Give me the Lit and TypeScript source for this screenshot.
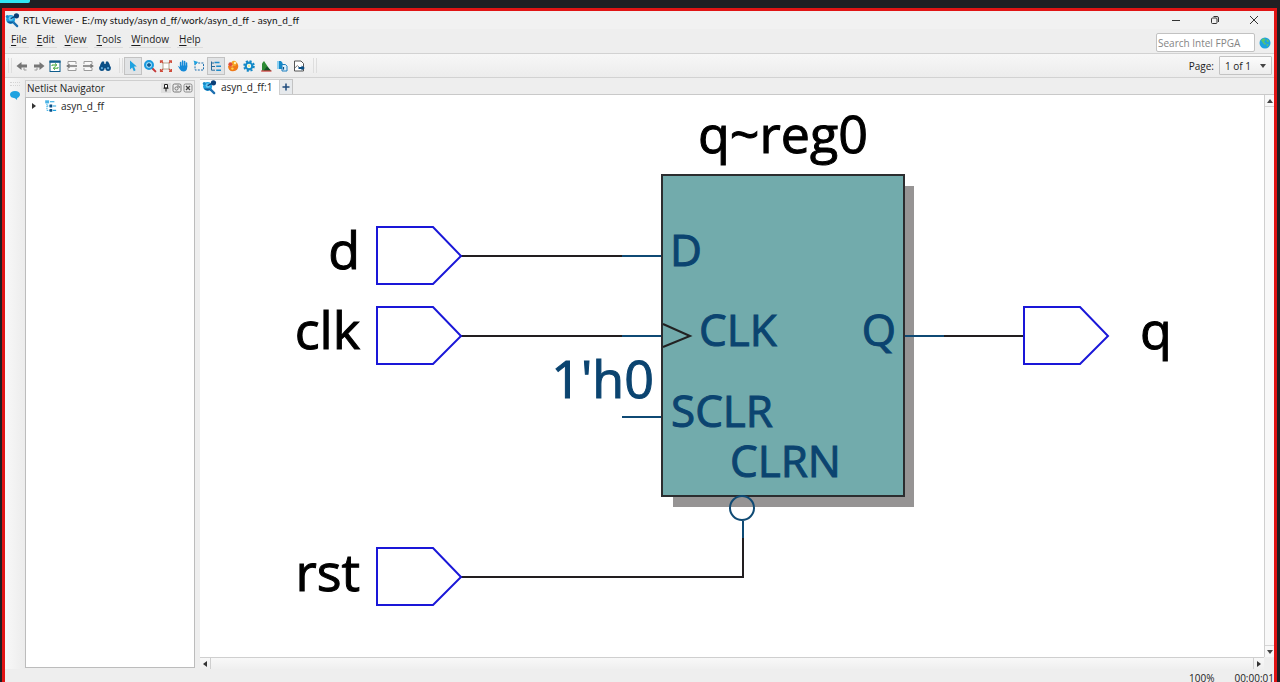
import { LitElement, html, css, svg } from "lit";
import { customElement, state } from "lit/decorators.js";

const BLUE = "#1ea2e0";
const NAVY = "#0b4f86";

const viewerLogo = svg`
  <path d="M9 10 L13 14" stroke="#1d6fb0" stroke-width="2.4" stroke-linecap="round"/>
  <circle cx="6" cy="6.8" r="4.8" fill="#1ea2e0"/>
  <circle cx="6.2" cy="5.8" r="2.4" fill="#6cc8f0"/>
  <path d="M2 9 A4.8 4.8 0 0 0 10 9 Z" fill="#135a9a"/>
  <circle cx="2.4" cy="3.6" r="1.6" fill="#1489c8"/>
  <path d="M6 6 L11 3.5" stroke="#0b3f77" stroke-width="1.4"/>
  <circle cx="12.2" cy="3" r="2.8" fill="#0b3f77"/>
`;

const icons = {
  back: svg`<path d="M2.5 8 L7.5 4 V6.4 H13 V9.6 H7.5 V12 Z" fill="#767676"/><path d="M10 9.6 V12 H12.5" stroke="#9a9a9a" fill="none"/>`,
  forward: svg`<path d="M13.5 8 L8.5 4 V6.4 H3 V9.6 H8.5 V12 Z" fill="#767676"/><path d="M6 9.6 V12 H3.5" stroke="#9a9a9a" fill="none"/>`,
  refresh: svg`<rect x="3" y="3" width="10" height="10.5" fill="#fff" stroke="#0f5c8c"/><path d="M2.5 3.8 H13.5" stroke="#0f5c8c" stroke-width="2"/><path d="M5 8 V7 H9.5 M8 5.4 L9.8 7 L8 8.5 M11 9 V10.2 H6.5 M8 8.8 L6.3 10.2 L8 11.8" stroke="#3fa535" fill="none"/>`,
  unfoldLeft: svg`<path d="M4 6 V3.5 H12 V6 M4 10 V12.5 H12 V10" stroke="#9a9a9a" fill="#fafafa"/><path d="M3 8 H13 M5.5 6.2 L3.2 8 L5.5 9.8" stroke="#777" stroke-width="1.3" fill="none"/>`,
  unfoldRight: svg`<path d="M4 6 V3.5 H12 V6 M4 10 V12.5 H12 V10" stroke="#9a9a9a" fill="#fafafa"/><path d="M3 8 H13 M10.5 6.2 L12.8 8 L10.5 9.8" stroke="#777" stroke-width="1.3" fill="none"/>`,
  find: svg`<path d="M3.5 6 L5 3.5 H7 L7.5 6 H8.5 L9 3.5 H11 L12.5 6 L13.6 10 H2.4 Z" fill="#0b4f86"/><circle cx="4.9" cy="10.2" r="2.7" fill="#0b4f86"/><circle cx="11.1" cy="10.2" r="2.7" fill="#0b4f86"/><circle cx="4.9" cy="10.2" r="1.1" fill="#5aa7d8"/><circle cx="11.1" cy="10.2" r="1.1" fill="#5aa7d8"/>`,
  select: svg`<path d="M5 2.5 L11.8 8.6 H9 L10.6 12.3 L8.8 13.2 L7.2 9.6 L5 11.6 Z" fill="#1ea2e0"/>`,
  zoom: svg`<path d="M10 10 L13.4 13.4" stroke="#c53a3a" stroke-width="2" stroke-linecap="round"/><circle cx="7" cy="7" r="4" fill="#8fd3f3" stroke="#1a9be0" stroke-width="2"/><path d="M7 5 V9 M5 7 H9" stroke="#0b4f86" stroke-width="1.3"/>`,
  fit: svg`<rect x="5" y="5" width="6" height="6" fill="#fff" stroke="#b5a58f"/><path d="M2.5 5 V2.8 H5 M11 2.8 H13.4 V5 M13.4 11 V13.4 H11 M5 13.4 H2.5 V11 M3 3 L5 5 M13 3 L11 5 M3 13 L5 11 M13 13 L11 11" stroke="#cf4d3c" stroke-width="1.2" fill="none"/>`,
  hand: svg`<path d="M5.6 8.5 V4.4 M7.6 8 V3 M9.6 8 V3.4 M11.5 8.6 V5" stroke="#1489d8" stroke-width="1.5" stroke-linecap="round"/><path d="M2.8 7.8 L5 9 V7.5 H12.2 V9.5 Q12 13.5 8.5 13.5 Q6 13.4 4.8 11.2 Z" fill="#1489d8"/>`,
  area: svg`<rect x="4" y="5" width="8.5" height="7" fill="none" stroke="#1e6fae" stroke-dasharray="2 1.2"/><path d="M2.5 2.5 L7.2 4 L4 7.2 Z" fill="#1ea2e0"/>`,
  tree: svg`<path d="M3.5 3.5 V12.2 H7 M3.5 5 H6 M3.5 8.5 H7" stroke="#2a6a98" fill="none"/><path d="M6.5 4.5 H11.5 M8.2 8.3 H13 M8.2 12.2 H13" stroke="#1e8dcc" stroke-width="1.5"/>`,
  palette: svg`<path d="M3 7.5 Q3 13.4 8 13.3 Q13.3 13 13.3 8 Q13 5 10.8 4.2 Q10.4 8 7.4 8.2 Q4.5 8 3 7.5" fill="#ef7a1a"/><circle cx="9" cy="5.4" r="2.6" fill="#f6a623"/><circle cx="5.4" cy="6.2" r="2" fill="#e04d3b"/><circle cx="10" cy="5" r="1.2" fill="#fff0b0"/><circle cx="7.4" cy="10.6" r="1.2" fill="#ffd44d"/>`,
  gear: svg`<circle cx="8" cy="8" r="4.9" fill="none" stroke="#1489c8" stroke-width="1.8" stroke-dasharray="2.1 1.75"/><circle cx="8" cy="8" r="3.3" fill="#fff" stroke="#1489c8" stroke-width="2.2"/><circle cx="8" cy="8" r="1.4" fill="#e8eea0"/>`,
  bird: svg`<path d="M4 12.8 V5.5 L6 3 L12.5 12.8 Z" fill="#2d8b34"/><path d="M5.5 12.8 L9 8.6 L13.4 12.8 Z" fill="#14532a"/><path d="M3.2 13 H13.5" stroke="#c33" stroke-width="1.2"/>`,
  export: svg`<path d="M3 3 H7 L8.6 5 V11 H3 Z" fill="#1489c8"/><path d="M3 3 H5 V11 H3 Z" fill="#8fd0f0"/><path d="M8 6.5 H11.5 L13 8.2 V13 H8 Z" fill="#dff1fb" stroke="#1e7fbe"/><path d="M9.5 9 V11.6" stroke="#0b4f86" stroke-width="1.2"/>`,
  image: svg`<path d="M3.5 3 H10 L12.5 5.5 V13 H3.5 Z" fill="#fff" stroke="#555"/><path d="M4 9.8 L6.4 7.5 L8.4 9.5" stroke="#777" fill="none"/><path d="M7.5 10 H11" stroke="#0b4f86" stroke-width="2"/><path d="M10.5 7.4 V12.6 L13.8 10 Z" fill="#0b4f86"/>`,
};

type IconName = keyof typeof icons;

const historyTools: [IconName, string][] = [
  ["back", "Back"], ["forward", "Forward"], ["refresh", "Refresh"],
  ["unfoldLeft", "Previous page"], ["unfoldRight", "Next page"], ["find", "Find"],
];
const viewTools: [IconName, string][] = [
  ["select", "Selection tool"], ["zoom", "Zoom tool"], ["fit", "Fit in window"],
  ["hand", "Hand tool"], ["area", "Area selection"], ["tree", "Netlist Navigator"],
  ["palette", "Color settings"], ["gear", "Display settings"], ["bird", "Bird's eye view"],
  ["export", "Copy"], ["image", "Export image"],
];

const icon = (art: unknown, cls = "icon") =>
  html`<svg class=${cls} viewBox="0 0 16 16" fill="none" aria-hidden="true">${art}</svg>`;

@customElement("rtl-schematic")
export class RtlSchematic extends LitElement {
  static styles = css`
    :host { display: block; min-width: 0; min-height: 0; background: #fff; overflow: hidden; }
    .sheet { display: block; width: 100%; height: 100%; }
    .sheet text { font-family: "Open Sans", "Noto Sans", sans-serif; stroke-width: 1px; }
    .name { font-size: 52px; fill: #000; stroke: #000; }
    .const { font-size: 52px; fill: #0b4470; stroke: #0b4470; }
    .pin { font-size: 44px; fill: #0b4470; stroke: #0b4470; }
    .port { fill: #fff; stroke: #1a17d8; stroke-width: 2; }
    .wire { fill: none; stroke: #221e20; stroke-width: 2; }
    .stub { fill: none; stroke: #0f4a74; stroke-width: 2; }
    .end { text-anchor: end; }
  `;

  private port(x: number, y: number) {
    return svg`<path class="port" d="M${x} ${y - 29} h56 l28 29 l-28 28 h-56 Z"/>`;
  }

  render() {
    return html`
      <svg class="sheet" viewBox="200 95 1064 562" role="img" aria-label="Schematic of asyn_d_ff">
        <rect x="673" y="186" width="241" height="321" fill="#969494"/>
        <rect x="662" y="175" width="242" height="321" fill="#72abac" stroke="#2b2d2f" stroke-width="2"/>
        <path class="wire" d="M461 256 H623 M461 336 H623 M944 336 H1023 M461 577 H743 V537"/>
        <path class="stub" d="M622 256 H661 M622 336 H661 M622 417 H661 M905 336 H944 M743 521 V538"/>
        <circle class="stub" cx="742" cy="508" r="12"/>
        <path d="M663 324 L690 336 L663 347" fill="none" stroke="#222" stroke-width="2"/>
        ${this.port(377, 256)} ${this.port(377, 336)} ${this.port(377, 577)} ${this.port(1024, 336)}
        <text class="name" x="698" y="153">q~reg0</text>
        <text class="name end" x="360" y="269">d</text>
        <text class="name end" x="360" y="349">clk</text>
        <text class="name end" x="360" y="591">rst</text>
        <text class="name" x="1140" y="349">q</text>
        <text class="const end" x="654" y="398">1'h0</text>
        <text class="pin" x="670" y="266">D</text>
        <text class="pin" x="699" y="346">CLK</text>
        <text class="pin end" x="896" y="346">Q</text>
        <text class="pin" x="671" y="427">SCLR</text>
        <text class="pin" x="730" y="477">CLRN</text>
      </svg>
    `;
  }
}

@customElement("app-root")
export class AppRoot extends LitElement {
  static styles = css`
    :host {
      display: grid; grid-template-rows: minmax(0, 1fr); box-sizing: border-box;
      height: 100vh; padding: 8px 3px 0 2px; overflow: hidden; position: relative;
      background: #1f1f23; color: #1c1c1c;
      font: 10px/14px "Open Sans", "Noto Sans", sans-serif;
    }
    * { box-sizing: border-box; }
    button, input, select { font: inherit; color: inherit; margin: 0; padding: 0; border: 0; background: none; }
    .accent { position: absolute; left: 0; top: 0; width: 30px; height: 3px; background: #2fe6f2; border-radius: 0 0 2px 0; }
    .window {
      display: grid; grid-template-rows: 18px 24px 25px minmax(0, 1fr) 13px;
      border: 3px solid #e01414; border-bottom: 0; background: #eee; min-height: 0;
    }
    .icon { display: block; width: 16px; height: 16px; }
    .logo { display: block; width: 15px; height: 15px; flex: none; }

    .title { display: flex; align-items: center; gap: 3px; background: #f1f1f1; }
    .title h1 { margin: 0; flex: 1; font: 10px/14px Lato, "Open Sans", sans-serif; color: #111; }
    .caption { display: flex; padding-right: 1px; }
    .caption button { width: 39px; height: 18px; display: grid; place-items: center; }
    .caption svg { width: 10px; height: 10px; }

    .menus { display: flex; align-items: flex-start; padding-left: 4px; }
    .menus nav { display: flex; flex: 1; gap: 6px; padding-top: 2px; }
    .menus nav button { height: 17px; padding: 0 2px; border-bottom: 1px solid #dcdcdc; }
    .menus nav button u { text-underline-offset: 2px; }
    .search { display: flex; align-items: center; gap: 4px; padding: 4px 3px 0 0; }
    .search input { width: 99px; height: 19px; padding: 0 1px; background: #fff; border: 1px solid #c2c2c2; border-radius: 2px; }
    .search input::placeholder { color: #858585; opacity: 1; }
    .globe { width: 12px; height: 12px; display: block; }

    .tools { display: flex; align-items: center; border: 1px solid #d2d2d2; border-width: 1px 0; background: linear-gradient(#f7f7f7, #ececec); padding: 0 2px 0 3px; }
    .grip { width: 4px; height: 15px; border: 1px solid #dedede; border-width: 0 1px; flex: none; }
    .group { display: flex; justify-content: space-between; margin: 0 6px 0 2px; }
    .group.history { width: 99px; }
    .group.view { width: 182px; }
    .group button { width: 16px; height: 16px; }
    .group button.on { outline: 1px solid #c2c2c2; background: #e1e3e5; }
    .page { display: flex; align-items: center; gap: 5px; margin-left: auto; }
    .picker { display: grid; align-items: center; }
    .picker > * { grid-area: 1 / 1; }
    .picker select { appearance: none; width: 53px; height: 19px; padding-left: 5px; border: 1px solid #c3c3c3; border-radius: 1px; background: linear-gradient(#fcfcfc, #ededed); }
    .picker svg { width: 6px; height: 4px; justify-self: end; margin-right: 6px; pointer-events: none; }

    .body { display: grid; grid-template-columns: 20px 170px minmax(0, 1fr); min-height: 0; }
    .rail { background: linear-gradient(90deg, #f8f8f8, #ececec); padding: 4px 4px 0; }
    .rail .dots { height: 4px; margin: 0 1px; border: 1px dotted #d4d4d4; border-width: 1px 0; }
    .rail button { display: block; margin-top: 3px; width: 12px; height: 12px; }
    .rail svg { width: 12px; height: 12px; display: block; }

    .navigator { display: grid; grid-template-rows: 17px minmax(0, 1fr); padding-top: 2px; min-height: 0; }
    .navhead { display: flex; align-items: center; gap: 1px; padding: 0 1px 2px; border: 1px solid #cfcfcf; border-width: 1px 1px 0 1px; }
    .navhead h2 { margin: 0; flex: 1; font: inherit; white-space: nowrap; }
    .navhead button { width: 10px; height: 10px; }
    .navhead button.pin { background: #dedede; }
    .navhead svg { display: block; width: 10px; height: 10px; }
    .list { margin: 0 0 1px; padding: 0 0 0 3px; background: #fff; border: 1px solid #bcbcbc; list-style: none; }
    .list li { display: flex; align-items: center; height: 15px; }
    .list .twisty { width: 10px; height: 12px; display: grid; place-items: center; }
    .twisty svg { width: 4px; height: 6px; }
    .list .icon { width: 14px; height: 14px; margin: 0 4px; }

    .editor { display: grid; grid-template: 17px minmax(0, 1fr) 12px / minmax(0, 1fr) 10px; padding-left: 5px; min-height: 0; }
    .tabs { grid-column: 1 / -1; display: flex; align-items: stretch; border-bottom: 1px solid #c9c9c9; }
    .tab { display: flex; align-items: center; gap: 4px; width: 80px; margin: 1px 0 -1px; padding: 0 0 1px 2px; background: #fff; border: 1px solid #cfcfcf; border-width: 1px 1px 0 0; white-space: nowrap; }
    .add { width: 13px; margin-top: 1px; display: grid; place-items: center; border: 1px solid #c3c3c3; border-width: 1px 1px 0 0; background: #e6e9ec; }
    .add svg { width: 8px; height: 8px; }
    .vbar { display: flex; flex-direction: column; justify-content: space-between; border-left: 1px solid #cfcfcf; background: #f8f8f8; }
    .vbar button { height: 12px; display: grid; place-items: center; }
    .hbar { display: flex; justify-content: space-between; border-top: 1px solid #cfcfcf; background: linear-gradient(#f8f8f8, #efefef); }
    .hbar button { width: 11px; display: grid; place-items: center; }
    .hbar button:first-child { border-right: 1px solid #cfcfcf; }
    .hbar button:last-child { border-left: 1px solid #cfcfcf; }
    .vbar button:first-child { border-bottom: 1px solid #d6d6d6; }
    .vbar button:last-child { border-top: 1px solid #d6d6d6; }
    .vbar svg { width: 6px; height: 4px; }
    .hbar svg { width: 4px; height: 6px; }

    .status { display: flex; justify-content: flex-end; align-items: flex-end; gap: 20px; line-height: 8px; }
  `;

  @state() private tool: IconName = "select";

  private toolButton([name, label]: [IconName, string]) {
    const on = name === this.tool || name === "tree";
    return html`<button class=${on ? "on" : ""} aria-label=${label} title=${label}
      @click=${() => (this.tool = name)}>${icon(icons[name])}</button>`;
  }

  render() {
    const menus = ["File", "Edit", "View", "Tools", "Window", "Help"];
    const up = html`<svg viewBox="0 0 6 4"><path d="M0 4 L3 0 L6 4Z" fill="#444"/></svg>`;
    const down = html`<svg viewBox="0 0 6 4"><path d="M0 0 L3 4 L6 0Z" fill="#444"/></svg>`;
    const left = html`<svg viewBox="0 0 4 6"><path d="M4 0 L0 3 L4 6Z" fill="#333"/></svg>`;
    const right = html`<svg viewBox="0 0 4 6"><path d="M0 0 L4 3 L0 6Z" fill="#333"/></svg>`;
    return html`
      <div class="accent"></div>
      <div class="window">
        <header class="title">
          ${icon(viewerLogo, "logo")}
          <h1>RTL Viewer - E:/my study/asyn d_ff/work/asyn_d_ff - asyn_d_ff</h1>
          <div class="caption">
            <button aria-label="Minimize"><svg viewBox="0 0 10 10"><path d="M1 5.5 H9" stroke="#333"/></svg></button>
            <button aria-label="Restore"><svg viewBox="0 0 10 10" fill="none" stroke="#333"><rect x="1.5" y="3" width="5.5" height="5.5" rx="1"/><path d="M3.5 1.5 H7 Q8.5 1.5 8.5 3 V7"/></svg></button>
            <button aria-label="Close"><svg viewBox="0 0 10 10"><path d="M1 1 L9 9 M9 1 L1 9" stroke="#333"/></svg></button>
          </div>
        </header>

        <div class="menus">
          <nav aria-label="Menu">
            ${menus.map((m) => html`<button><u>${m[0]}</u>${m.slice(1)}</button>`)}
          </nav>
          <div class="search">
            <input type="search" aria-label="Search Intel FPGA" placeholder="Search Intel FPGA" />
            <svg class="globe" viewBox="0 0 12 12" aria-hidden="true"><circle cx="6" cy="6" r="5.5" fill=${BLUE}/><path d="M2 3 L5 1 L6.5 2.5 L5 5 L7 6.5 L6 8 L4 6 Z M8 2 L10 4 L9 5.5 L7.5 4 Z M7.5 7 L10 7.5 L8 10 Z" fill="#5cc46e"/></svg>
          </div>
        </div>

        <div class="tools">
          <span class="grip"></span>
          <div class="group history">${historyTools.map((t) => this.toolButton(t))}</div>
          <span class="grip"></span>
          <div class="group view">${viewTools.map((t) => this.toolButton(t))}</div>
          <span class="grip"></span>
          <div class="page">
            <label for="page">Page:</label>
            <div class="picker">
              <select id="page"><option>1 of 1</option></select>
              ${down}
            </div>
          </div>
        </div>

        <div class="body">
          <aside class="rail">
            <div class="dots"></div>
            <button aria-label="Messages"><svg viewBox="0 0 12 12"><path d="M6 2 C9 2 11 3.4 11 5.6 C11 7.2 9.8 8.5 8.2 9 L8 11 L6 9.2 C3 9.2 1 7.8 1 5.6 C1 3.4 3 2 6 2 Z" fill=${BLUE}/></svg></button>
          </aside>

          <section class="navigator">
            <div class="navhead">
              <h2>Netlist Navigator</h2>
              <button class="pin" aria-label="Pin"><svg viewBox="0 0 10 10"><path d="M3.5 1.5 H6.5 V5 H3.5 Z M2.5 5.2 H7.5 M5 5.5 V8.5" fill="#fff" stroke="#222"/></svg></button>
              <button aria-label="Float"><svg viewBox="0 0 10 10" fill="none" stroke="#777"><rect x="1" y="1" width="8" height="8" rx="1.5"/><circle cx="4.5" cy="5.5" r="1.6"/><path d="M5 3 H7.2 V5"/></svg></button>
              <button aria-label="Close panel"><svg viewBox="0 0 10 10" fill="none" stroke="#444"><rect x="1" y="1" width="8" height="8" rx="1.5" stroke="#888"/><path d="M3 3 L7 7 M7 3 L3 7" stroke-width="1.3"/></svg></button>
            </div>
            <ul class="list">
              <li>
                <button class="twisty" aria-label="Expand">${right}</button>
                ${icon(svg`<path d="M4.5 3 V13 H9 M4.5 8 H9" stroke="#1ea2e0" stroke-dasharray="1.6 .8"/><path d="M2.5 1.5 H7 V5 H2.5 Z" fill="#4bb4e6"/><path d="M7.5 6.4 H10.5 V9.6 H7.5 Z M7.5 11.4 H10.5 V14.6 H7.5 Z" fill=${NAVY}/><path d="M8 3.2 H13 M11 8 H15 M11 13 H15" stroke="#1ea2e0" stroke-width="1.3"/>`)}
                <span>asyn_d_ff</span>
              </li>
            </ul>
          </section>

          <section class="editor">
            <div class="tabs">
              <button class="tab">${icon(viewerLogo, "logo")}<span>asyn_d_ff:1</span></button>
              <button class="add" aria-label="New tab"><svg viewBox="0 0 8 8"><path d="M4 0.5 V7.5 M0.5 4 H7.5" stroke="#1c4a7c" stroke-width="1.5"/></svg></button>
            </div>
            <rtl-schematic></rtl-schematic>
            <div class="vbar"><button aria-label="Scroll up">${up}</button><button aria-label="Scroll down">${down}</button></div>
            <div class="hbar"><button aria-label="Scroll left">${left}</button><button aria-label="Scroll right">${right}</button></div>
          </section>
        </div>

        <footer class="status"><span>100%</span><span>00:00:01</span></footer>
      </div>
    `;
  }
}
